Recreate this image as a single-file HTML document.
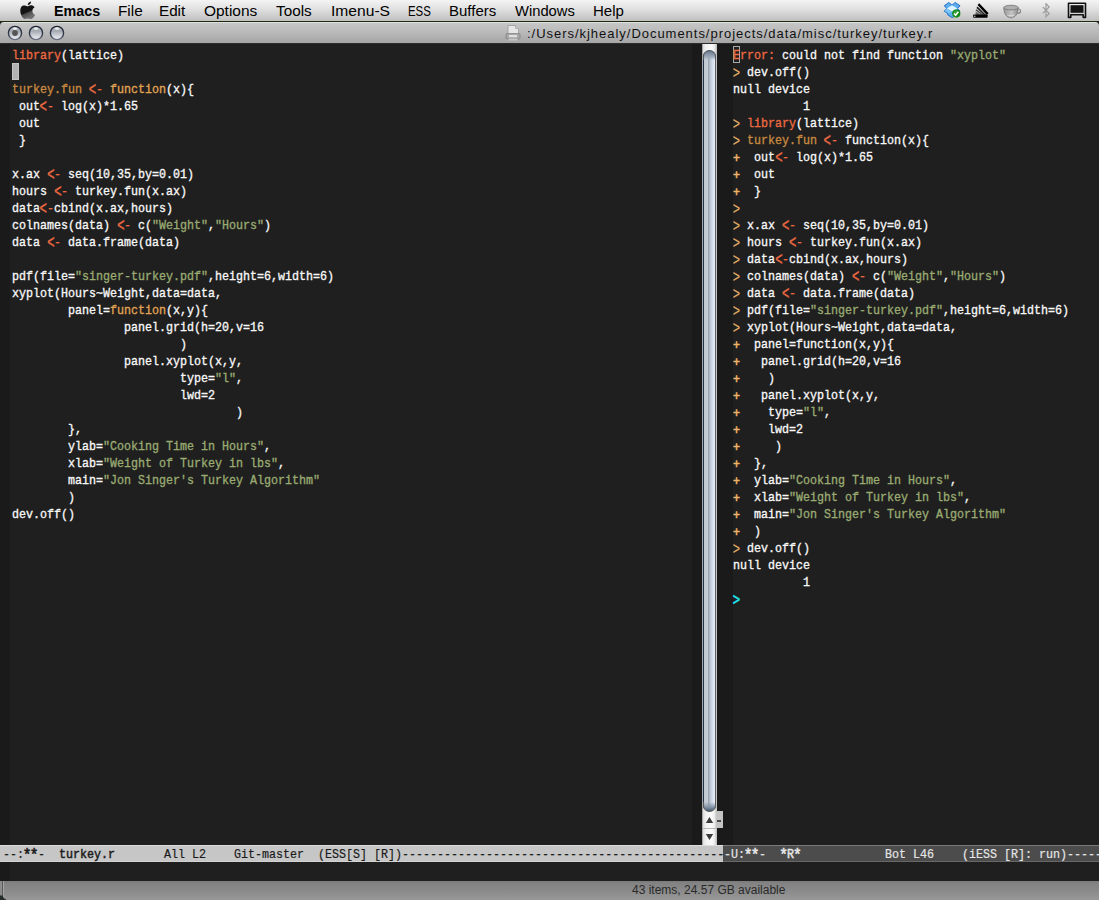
<!DOCTYPE html>
<html><head><meta charset="utf-8">
<style>
*{margin:0;padding:0;box-sizing:border-box}
html,body{width:1099px;height:900px;overflow:hidden;background:#1f1f1f;font-family:"Liberation Sans",sans-serif}
.abs{position:absolute}
#menubar{position:absolute;left:0;top:0;width:1099px;height:21px;background:linear-gradient(#f4f4f4,#e2e2e2 40%,#cecece 75%,#c0c0c0)}
#menuline{position:absolute;left:0;top:21px;width:1099px;height:1px;background:#1d2a14}
.mi{position:absolute;top:2px;transform-origin:0 0;font-size:14px;color:#000;white-space:nowrap;line-height:18px}
#titlebar{position:absolute;left:0;top:22px;width:1099px;height:22px;background:linear-gradient(#e0e0e0 0,#e0e0e0 1px,#c6c6c6 1px,#b8b8b8 50%,#a6a6a6 21px,#2c2c2c 21px);border-top-left-radius:4px;border-top-right-radius:4px}
#titletext{position:absolute;left:527px;top:26px;font-size:13px;letter-spacing:0.97px;color:#111;white-space:nowrap;line-height:16px}
.btn{position:absolute;top:25px;width:14px;height:14px;border-radius:50%;border:1px solid #3a3f4a;background:radial-gradient(circle at 50% 30%,#f4f6f8 0,#c6cad0 45%,#e2e5ea 80%,#f0f2f4 100%)}
#content{position:absolute;left:0;top:44px;width:1099px;height:837px;background:#1f1f1f}
.fr{position:absolute;background:#1a1a1a}
.code{position:absolute;font-family:"Liberation Mono",monospace;font-size:13.5px;line-height:17px;color:#f8f8f8;white-space:normal;transform-origin:0 0;transform:scaleX(0.86420);-webkit-text-stroke:0.35px currentColor}
.code div{height:17px;white-space:pre}
.k{color:#ee6a42}   /* library */
.f{color:#c98a40}
.fn{color:#e0a354}   /* turkey.fun / function */
.a{color:#ee6a42}   /* <- */
.s{color:#9aab72}   /* strings */
.p{color:#ecb468}
.lt{display:inline-block;transform:translateY(1.2px) scale(1.05,1.35)}
.pl{display:inline-block;transform:translateY(1.5px) scaleY(0.92);-webkit-text-stroke:0.6px currentColor}
.g{display:inline-block;transform:translateY(1.5px) scale(1.05,1.28);-webkit-text-stroke:0.15px currentColor}
.c{color:#22e6f2}
.code .c.g{-webkit-text-stroke:0.55px currentColor}
#scroll{position:absolute;left:702px;top:44px;width:15px;height:801px;background:linear-gradient(90deg,#a8a8a8 0,#a8a8a8 1px,#dcdcdc 1px,#f2f2f2 4px,#fafafa 10px,#e8e8e8 13px,#c4c4c4 14px,#c4c4c4 15px)}
#thumb{position:absolute;left:703px;top:50px;width:13px;height:762px;border-radius:6.5px;overflow:hidden;background:linear-gradient(90deg,#24364e 0,#24364e 1px,#c2c8d0 1px,#c8ced6 5px,#8894a6 5px,#a8b4c2 6px,#d0dae6 9px,#e6eefa 12px,#5e5e5e 12px,#5e5e5e 13px)}
#thumbcap{position:absolute;left:703px;top:50px;width:13px;height:10px;border-radius:6.5px 6.5px 0 0;border:1px solid #505862;border-bottom:none;background:linear-gradient(#6c7a8e,#9aa6b6 60%,transparent)}
#thumbbot{position:absolute;left:703px;top:802px;width:13px;height:10px;border-radius:0 0 6.5px 6.5px;border:1px solid #5a5a5a;border-top:none;background:linear-gradient(transparent,#8090a4 60%,#4a5a70)}
.ml{position:absolute;top:845px;height:17px;font-family:"Liberation Mono",monospace;font-size:13.5px;line-height:17px;white-space:pre;-webkit-text-stroke:0.2px currentColor}
#ml1{left:0;width:723px;background:#c6c6c6;color:#1a1a1a;border-top:1px solid #dcdcdc;border-bottom:1px solid #d2d2d2}
#ml2{left:723px;width:376px;background:#4c4c4c;color:#e6e6e6;border-top:1px solid #7a7a7a;border-bottom:1px solid #686868}
.ast{display:inline-block;transform:translateY(1px) scale(1.25);-webkit-text-stroke:0.5px currentColor}
.bn{-webkit-text-stroke:0.5px currentColor}
.mlt{position:absolute;left:3px;top:0;transform-origin:0 0;transform:scaleX(0.8642)}
#status{position:absolute;left:3px;top:881px;width:1096px;height:19px;background:linear-gradient(#7a7a7a,#828282 2px,#8a8a8a 50%,#989898);border-left:1px solid #a4a4a4}
#statusl{position:absolute;left:0;top:881px;width:3px;height:19px;background:linear-gradient(90deg,#8c8c8c 0,#8c8c8c 2px,#5a5a5a 2px)}
#stext{position:absolute;left:632px;top:882.5px;font-size:12px;color:#2a2a2a;white-space:nowrap;line-height:14px}
</style></head><body>
<div id="menubar"></div>
<div id="menuline"></div>
<svg class="abs" style="left:20px;top:1px" width="16" height="19" viewBox="0 0 16 19">
<defs><linearGradient id="ag" x1="0" y1="0.35" x2="0.3" y2="1"><stop offset="0.45" stop-color="#141414"/><stop offset="0.55" stop-color="#4a4a4a"/><stop offset="1" stop-color="#6e6e6e"/></linearGradient></defs>
<path fill="url(#ag)" d="M7.6 5.4C6.2 4.5 4.6 4.1 3.1 4.6C1.1 5.3 0.2 7.6 0.3 10C0.4 13.1 2.2 17 4.1 17.8C5.4 18.3 6.4 17.5 7.9 17.5C9.4 17.5 10.3 18.3 11.6 17.8C13.1 17.2 14.4 15.1 15.1 13.9C13.3 13.1 12.4 11.6 12.4 9.9C12.4 8.3 13.3 7.1 14.6 6.3C13.6 4.8 12.1 4.3 10.9 4.3C9.5 4.3 8.5 5.1 7.6 5.4Z"/>
<path fill="#111" d="M7.7 4.1C7.6 2.4 9.1 0.7 11.1 0.4C11.2 2.3 9.6 4 7.7 4.1Z"/>
</svg>
<div class="mi" style="left:53.5px;transform:scaleX(1.023);font-weight:bold">Emacs</div>
<div class="mi" style="left:117.5px;transform:scaleX(1.095)">File</div>
<div class="mi" style="left:158.9px;transform:scaleX(1.087)">Edit</div>
<div class="mi" style="left:204.0px;transform:scaleX(1.104)">Options</div>
<div class="mi" style="left:276.0px;transform:scaleX(1.091)">Tools</div>
<div class="mi" style="left:331.1px;transform:scaleX(1.115)">Imenu-S</div>
<div class="mi" style="left:407.7px;transform:scaleX(0.815)">ESS</div>
<div class="mi" style="left:448.9px;transform:scaleX(1.070)">Buffers</div>
<div class="mi" style="left:515.0px;transform:scaleX(1.053)">Windows</div>
<div class="mi" style="left:593.2px;transform:scaleX(1.071)">Help</div>
<!-- dropbox -->
<svg class="abs" style="left:943px;top:1px" width="19" height="19" viewBox="0 0 19 19">
<path d="M5.8 1.5L9 4.2L12.2 1.5L17 4.8L14.5 7.4L17 10.2L13.8 12.4V13.8L9.2 16.6L4.6 13.8V12.4L1.2 10.2L3.8 7.4L1.2 4.8Z" fill="#5caeee" stroke="#2070c8" stroke-width="1"/>
<path d="M9 4.2L14.5 7.4L9 10.4L3.8 7.4Z" fill="#dff2ff"/>
<path d="M3.8 7.4L9 10.4L6.2 12.6L1.6 10Z" fill="#7cc4f6"/>
<circle cx="13.3" cy="12.6" r="4.1" fill="#118a18"/>
<circle cx="12.8" cy="11.4" r="2" fill="#52b852" opacity="0.6"/>
<path d="M11 12.6L12.6 14.3L15.4 10.8" fill="none" stroke="#fff" stroke-width="1.5"/>
</svg>
<!-- fan icon -->
<svg class="abs" style="left:973px;top:3px" width="17" height="15" viewBox="0 0 17 15">
<path d="M6.2 0.3L15.6 10.3L13.8 12L4.6 2Z" fill="#000"/>
<path d="M4.6 3.6L13 12L11.6 12.4L3.4 5Z" fill="#222"/>
<path d="M3.4 6.2L11.2 12.2L9.8 12.4L2.6 7.6Z" fill="#444"/>
<path d="M2.6 8.4L9.6 12.4L2.6 12.4Z" fill="#666"/>
<rect x="0.2" y="11.6" width="14.4" height="3.2" rx="0.7" fill="#000"/>
<circle cx="1.8" cy="13.2" r="0.7" fill="#e0e0e0"/>
</svg>
<!-- teacup -->
<svg class="abs" style="left:1003px;top:4px" width="20" height="15" viewBox="0 0 20 15">
<defs><linearGradient id="tg" x1="0" y1="0" x2="1" y2="0"><stop offset="0" stop-color="#9a9a9a"/><stop offset="0.55" stop-color="#c4c4c4"/><stop offset="1" stop-color="#8c8c8c"/></linearGradient></defs>
<path d="M15.2 5C18.4 4.6 18.6 9.6 14.4 9.4" fill="none" stroke="#858585" stroke-width="1.1"/>
<path d="M0.8 3.6C0.8 10 4 13.8 8 13.8C12 13.8 15.2 10 15.2 3.6Z" fill="url(#tg)" stroke="#7c7c7c" stroke-width="0.9"/>
<ellipse cx="8" cy="3.6" rx="7.2" ry="2.3" fill="#b0b0b0" stroke="#7c7c7c" stroke-width="0.9"/>
<path d="M3.8 10.6C6.4 11.8 9.6 11.8 12.2 10.6C11 12.6 5 12.6 3.8 10.6Z" fill="#e6e6e6"/>
</svg>
<!-- bluetooth -->
<svg class="abs" style="left:1042px;top:3px" width="9" height="15" viewBox="0 0 9 15">
<path d="M0.8 4L7.2 10.4L4 13.8L4 0.6L7.2 4L0.8 10.4" fill="none" stroke="#9a9a9a" stroke-width="1.1"/>
</svg>
<!-- display -->
<svg class="abs" style="left:1067px;top:2px" width="20" height="17" viewBox="0 0 20 17">
<path d="M1.5 1.2H18.5V15.4H16.2V12.8H3.8V15.4H1.5Z" fill="none" stroke="#111" stroke-width="1.6" stroke-linejoin="round"/>
<rect x="3.5" y="3.2" width="13" height="7.6" fill="#141414"/>
</svg>
<div id="titlebar"></div>
<svg width="0" height="0" style="position:absolute"><defs>
<linearGradient id="bf" x1="0" y1="0" x2="0" y2="1"><stop offset="0" stop-color="#c8ccd2"/><stop offset="0.35" stop-color="#a4a8b0"/><stop offset="0.7" stop-color="#d0d4da"/><stop offset="1" stop-color="#eceef2"/></linearGradient>
<linearGradient id="bs" x1="0" y1="0" x2="0" y2="1"><stop offset="0" stop-color="#1c2232"/><stop offset="0.6" stop-color="#323a4c"/><stop offset="1" stop-color="#6a7080"/></linearGradient>
</defs></svg>
<svg class="abs" style="left:7px;top:25px" width="16" height="16" viewBox="0 0 16 16"><circle cx="8" cy="8" r="6.6" fill="url(#bf)" stroke="url(#bs)" stroke-width="1.4"/><ellipse cx="8" cy="3.6" rx="2" ry="1.2" fill="#f4f8f0" opacity="0.9"/><circle cx="8" cy="8" r="2.9" fill="#555"/></svg>
<svg class="abs" style="left:28px;top:25px" width="16" height="16" viewBox="0 0 16 16"><circle cx="8" cy="8" r="6.6" fill="url(#bf)" stroke="url(#bs)" stroke-width="1.4"/><ellipse cx="8" cy="3.6" rx="2" ry="1.2" fill="#f4f8f0" opacity="0.9"/></svg>
<svg class="abs" style="left:49px;top:25px" width="16" height="16" viewBox="0 0 16 16"><circle cx="8" cy="8" r="6.6" fill="url(#bf)" stroke="url(#bs)" stroke-width="1.4"/><ellipse cx="8" cy="3.6" rx="2" ry="1.2" fill="#f4f8f0" opacity="0.9"/></svg>
<svg class="abs" style="left:505px;top:25px" width="17" height="16" viewBox="0 0 17 16">
<path d="M3 0.5H10.5L13.5 3.5V12H3Z" fill="#e6e6e6" stroke="#9a9a9a" stroke-width="0.8"/>
<path d="M10.5 0.5V3.5H13.5" fill="#cfcfcf" stroke="#9a9a9a" stroke-width="0.6"/>
<rect x="1" y="8.5" width="14" height="5.5" rx="1" fill="#a8a8a8" stroke="#7c7c7c" stroke-width="0.7"/>
<rect x="4" y="10" width="8" height="2.2" fill="#e0e0e0"/>
<rect x="3.5" y="13.6" width="9" height="1.8" fill="#c8c8c8"/>
</svg>
<div id="titletext">:/Users/kjhealy/Documents/projects/data/misc/turkey/turkey.r</div>

<div id="content"></div>
<div class="fr" style="left:0;top:44px;width:10px;height:801px"></div>
<div class="fr" style="left:692px;top:44px;width:10px;height:801px"></div>
<div class="fr" style="left:717px;top:44px;width:16px;height:801px"></div>

<div class="code" style="left:12px;top:47px">
<div><span class="k">library</span>(lattice)</div>
<div> </div>
<div><span class="f">turkey.fun</span> <span class="a"><span class="lt">&lt;</span>-</span> <span class="fn">function</span>(x){</div>
<div> out<span class="a"><span class="lt">&lt;</span>-</span> log(x)*1.65</div>
<div> out</div>
<div> }</div>
<div> </div>
<div>x.ax <span class="a"><span class="lt">&lt;</span>-</span> seq(10,35,by=0.01)</div>
<div>hours <span class="a"><span class="lt">&lt;</span>-</span> turkey.fun(x.ax)</div>
<div>data<span class="a"><span class="lt">&lt;</span>-</span>cbind(x.ax,hours)</div>
<div>colnames(data) <span class="a"><span class="lt">&lt;</span>-</span> c(<span class="s">"Weight"</span>,<span class="s">"Hours"</span>)</div>
<div>data <span class="a"><span class="lt">&lt;</span>-</span> data.frame(data)</div>
<div> </div>
<div>pdf(file=<span class="s">"singer-turkey.pdf"</span>,height=6,width=6)</div>
<div>xyplot(Hours~Weight,data=data,</div>
<div>        panel=<span class="fn">function</span>(x,y){</div>
<div>                panel.grid(h=20,v=16</div>
<div>                        )</div>
<div>                panel.xyplot(x,y,</div>
<div>                        type=<span class="s">"l"</span>,</div>
<div>                        lwd=2</div>
<div>                                )</div>
<div>        },</div>
<div>        ylab=<span class="s">"Cooking Time in Hours"</span>,</div>
<div>        xlab=<span class="s">"Weight of Turkey in lbs"</span>,</div>
<div>        main=<span class="s">"Jon Singer's Turkey Algorithm"</span></div>
<div>        )</div>
<div>dev.off()</div>
</div>
<div class="abs" style="left:12px;top:63px;width:7px;height:17px;background:#b2b2b2;border:1px solid #c4c4c4"></div>

<div class="abs" style="left:733px;top:46px;width:7px;height:17px;border:1px solid #a8a8a8"></div>
<div id="scroll"></div>
<div id="thumb"></div><div id="thumbcap"></div><div id="thumbbot"></div>
<div class="abs" style="left:703px;top:828px;width:13px;height:1px;background:#b8b8b8"></div>
<svg class="abs" style="left:705px;top:816px" width="9" height="8" viewBox="0 0 9 8"><path d="M4.5 1L8.2 7H0.8Z" fill="#3c3c3c"/></svg>
<svg class="abs" style="left:705px;top:833px" width="9" height="8" viewBox="0 0 9 8"><path d="M0.8 1H8.2L4.5 7Z" fill="#3c3c3c"/></svg>
<div class="abs" style="left:717px;top:811px;width:6px;height:17px;background:#c4c4c4"></div>
<div class="abs" style="left:717px;top:820px;width:4px;height:2px;background:#4a4a4a"></div>

<div class="code" style="left:733px;top:47px">
<div><span class="k">Error:</span> could not find function <span class="s">"xyplot"</span></div>
<div><span class="p g">&gt;</span> dev.off()</div>
<div>null device </div>
<div>          1 </div>
<div><span class="p g">&gt;</span> <span class="k">library</span>(lattice)</div>
<div><span class="p g">&gt;</span> <span class="f">turkey.fun</span> <span class="a"><span class="lt">&lt;</span>-</span> function(x){</div>
<div><span class="p pl">+</span>  out<span class="a"><span class="lt">&lt;</span>-</span> log(x)*1.65</div>
<div><span class="p pl">+</span>  out</div>
<div><span class="p pl">+</span>  }</div>
<div><span class="p g">&gt;</span> </div>
<div><span class="p g">&gt;</span> x.ax <span class="a"><span class="lt">&lt;</span>-</span> seq(10,35,by=0.01)</div>
<div><span class="p g">&gt;</span> hours <span class="a"><span class="lt">&lt;</span>-</span> turkey.fun(x.ax)</div>
<div><span class="p g">&gt;</span> data<span class="a"><span class="lt">&lt;</span>-</span>cbind(x.ax,hours)</div>
<div><span class="p g">&gt;</span> colnames(data) <span class="a"><span class="lt">&lt;</span>-</span> c(<span class="s">"Weight"</span>,<span class="s">"Hours"</span>)</div>
<div><span class="p g">&gt;</span> data <span class="a"><span class="lt">&lt;</span>-</span> data.frame(data)</div>
<div><span class="p g">&gt;</span> pdf(file=<span class="s">"singer-turkey.pdf"</span>,height=6,width=6)</div>
<div><span class="p g">&gt;</span> xyplot(Hours~Weight,data=data,</div>
<div><span class="p pl">+</span>  panel=function(x,y){</div>
<div><span class="p pl">+</span>   panel.grid(h=20,v=16</div>
<div><span class="p pl">+</span>    )</div>
<div><span class="p pl">+</span>   panel.xyplot(x,y,</div>
<div><span class="p pl">+</span>    type=<span class="s">"l"</span>,</div>
<div><span class="p pl">+</span>    lwd=2</div>
<div><span class="p pl">+</span>     )</div>
<div><span class="p pl">+</span>  },</div>
<div><span class="p pl">+</span>  ylab=<span class="s">"Cooking Time in Hours"</span>,</div>
<div><span class="p pl">+</span>  xlab=<span class="s">"Weight of Turkey in lbs"</span>,</div>
<div><span class="p pl">+</span>  main=<span class="s">"Jon Singer's Turkey Algorithm"</span></div>
<div><span class="p pl">+</span>  )</div>
<div><span class="p g">&gt;</span> dev.off()</div>
<div>null device </div>
<div>          1 </div>
<div><span class="c g">&gt;</span> </div>
</div>

<div class="ml" id="ml1"><div class="mlt">--:<span class="ast">*</span><span class="ast">*</span>-  <span class="bn">turkey.r</span>       All L2    Git-master  (ESS[S] [R])-------------------------------------------------------------------</div></div>
<div class="ml" id="ml2"><div class="mlt" style="left:1px">-U:<span class="ast">*</span><span class="ast">*</span>-  <span class="bn"><span class="ast">*</span>R<span class="ast">*</span></span>            Bot L46    (iESS [R]: run)-----------------------------------</div></div>

<div id="statusl"></div>
<div id="status"></div>
<svg class="abs" style="left:0;top:895px" width="8" height="5" viewBox="0 0 8 5"><path d="M0 0.6H2.6C3 2.6 4.6 4.2 7 5H0Z" fill="#262b2b"/></svg>
<div class="fr" style="left:0;top:862px;width:10px;height:19px"></div>
<div id="stext">43 items, 24.57 GB available</div>
</body></html>
